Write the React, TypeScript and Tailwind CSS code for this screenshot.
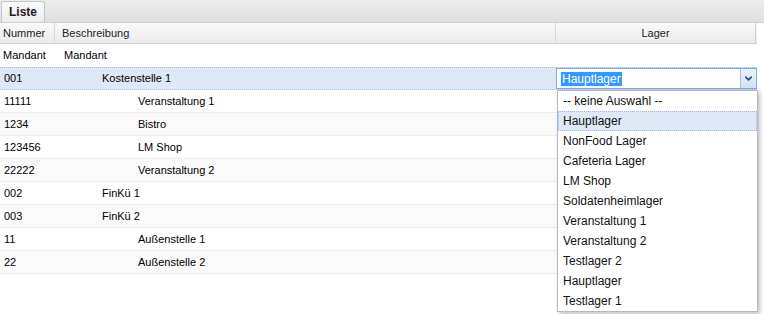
import { ChevronDown } from "lucide-react";

type Row = { nr: string; text: string; indent: number };

const rows: Row[] = [
  { nr: "Mandant", text: "Mandant", indent: 0 },
  { nr: "001", text: "Kostenstelle 1", indent: 1 },
  { nr: "11111", text: "Veranstaltung 1", indent: 2 },
  { nr: "1234", text: "Bistro", indent: 2 },
  { nr: "123456", text: "LM Shop", indent: 2 },
  { nr: "22222", text: "Veranstaltung 2", indent: 2 },
  { nr: "002", text: "FinKü 1", indent: 1 },
  { nr: "003", text: "FinKü 2", indent: 1 },
  { nr: "11", text: "Außenstelle 1", indent: 2 },
  { nr: "22", text: "Außenstelle 2", indent: 2 },
];

const lager = [
  "-- keine Auswahl --",
  "Hauptlager",
  "NonFood Lager",
  "Cafeteria Lager",
  "LM Shop",
  "Soldatenheimlager",
  "Veranstaltung 1",
  "Veranstaltung 2",
  "Testlager 2",
  "Hauptlager",
  "Testlager 1",
];

const indentClass = ["pl-[9px]", "pl-[47px]", "pl-[83px]"];

const App = () => {
  return (
    <div className="relative w-[764px] h-[314px] overflow-hidden bg-white text-[11px] text-black font-['Liberation_Sans',Arial,sans-serif]">
      {/* Tab strip */}
      <div className="flex h-[23px] items-end border-b border-[#d0d0d0] bg-gradient-to-b from-[#ececec] to-[#e0e0e0] pl-[1px]">
        <div className="flex h-[21px] w-[44px] items-center justify-center rounded-t-[3px] border border-b-0 border-[#c5c5c5] bg-gradient-to-b from-[#fafafa] to-[#ececec] text-[12px] font-bold text-[#222]">
          Liste
        </div>
      </div>

      {/* Header */}
      <div className="flex h-[21px] w-[757px] border-b border-[#d0d0d0] bg-gradient-to-b from-[#fafafa] to-[#ebebeb] text-[#222]">
        <div className="flex w-[55px] items-center border-r border-[#d8d8d8] pl-[3px]">Nummer</div>
        <div className="flex w-[501px] items-center border-r border-[#d8d8d8] pl-[7px]">Beschreibung</div>
        <div className="flex w-[200px] items-center justify-center border-r border-[#d0d0d0]">Lager</div>
      </div>

      {/* Rows */}
      <div className="w-[757px]">
        {rows.map((r, i) => {
          const selected = i === 1;
          const shaded = i % 2 === 1 && !selected;
          return (
            <div
              key={i}
              className={
                selected
                  ? "flex h-[23px] items-center border-y border-dotted border-[#a3bae9] bg-[#dfe8f6]"
                  : shaded
                  ? "flex h-[23px] items-center border-b border-[#ededed] bg-[#fafafa]"
                  : i === 0
                  ? "flex h-[23px] items-center bg-white"
                  : "flex h-[23px] items-center border-b border-[#ededed] bg-white"
              }
            >
              <div className={i === 0 ? "w-[55px] pl-[3px]" : "w-[55px] pl-[4px]"}>{r.nr}</div>
              <div className={"w-[501px] " + indentClass[r.indent]}>{r.text}</div>
              <div className="w-[201px]">
                {selected && (
                  <div className="flex h-[21px] border border-[#7eadd9] bg-white">
                    <div className="flex flex-1 items-center pl-[4px] text-[12px]">
                      <span className="bg-[#3399ff] px-[1px] leading-[14px] text-white">Hauptlager</span>
                    </div>
                    <div className="flex w-[16px] items-center justify-center border-l border-[#a3c0e0] bg-gradient-to-b from-[#eaf1fb] to-[#d3e1f3]">
                      <ChevronDown className="h-[11px] w-[11px] text-[#2b4a7a]" strokeWidth={3.5} />
                    </div>
                  </div>
                )}
              </div>
            </div>
          );
        })}
      </div>

      {/* Dropdown list */}
      <div className="absolute left-[557px] top-[90px] w-[201px] border border-[#b5b8c8] bg-white text-[12px] text-[#111] shadow-[2px_2px_4px_rgba(0,0,0,0.25)]">
        {lager.map((l, i) => (
          <div
            key={i}
            className={
              i === 1
                ? "flex h-[20px] items-center border border-dotted border-[#a3bae9] bg-[#dfe8f6] pl-[4px]"
                : "flex h-[20px] items-center border border-transparent pl-[4px]"
            }
          >
            {l}
          </div>
        ))}
      </div>
    </div>
  );
};

export default App;
